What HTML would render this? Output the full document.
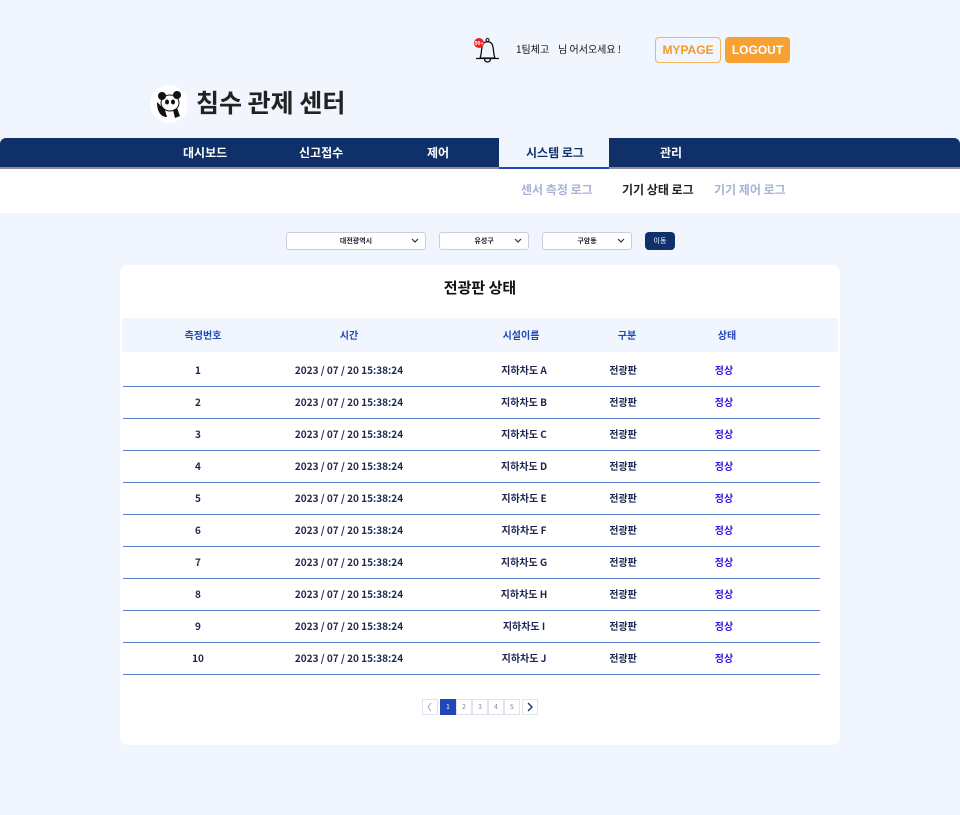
<!DOCTYPE html>
<html><head><meta charset="utf-8"><style>
*{margin:0;padding:0;box-sizing:border-box}
body{width:960px;height:815px;background:#f0f5fe;font-family:"Noto Sans CJK KR","Liberation Sans",sans-serif;position:relative;overflow:hidden;color:#111}
.abs{position:absolute}
.nav{left:0;top:138px;width:960px;height:31px;background:#10306a;border-radius:6px 6px 0 0;border-bottom:2px solid #8a8f99}
.nav span{position:absolute;top:7px;color:#fff;font-size:12px;font-weight:bold;line-height:16px}
.sub{left:0;top:169px;width:960px;height:44px;background:#fff}
.sel{top:232px;height:18px;background:#fff;border:1px solid #ccd;border-radius:3px;font-size:7px;font-weight:bold;text-align:center;line-height:16px;color:#223}
.chev{position:absolute;right:6px;top:5px}
.card{left:120px;top:265px;width:720px;height:480px;background:#fff;border-radius:8px}
.hdr{left:122px;top:318px;width:716px;height:34px;background:#f0f5fe}
.c{position:absolute;font-size:10px;line-height:12px;font-weight:bold;color:#1d2550;transform:translateX(-50%);white-space:nowrap}
.h{color:#1f47b8;top:329px}
.line{position:absolute;left:123px;width:697px;height:1px;background:#5a83cc}
.pg{top:699px;height:16px;width:16px;border:1px solid #e0e4ec;background:#fff;font-size:7px;color:#888;text-align:center;line-height:14px}
</style></head><body>
<svg class="abs" style="left:472px;top:35px" width="30" height="30" viewBox="0 0 30 30"><path d="M8 23 C10 19 9 12 11 9 C13 6 18 6 20 9 C22 12 21 19 23 23 Z" fill="none" stroke="#111" stroke-width="1.3"/><path d="M4 23.5 H27" stroke="#111" stroke-width="1.3"/><path d="M12.5 24 a3 3 0 0 0 6 0" fill="none" stroke="#111" stroke-width="1.3"/><circle cx="15.5" cy="5" r="1.5" fill="none" stroke="#111"/><circle cx="7" cy="8" r="5" fill="#e22"/><text x="7" y="10" font-size="5" fill="#fff" text-anchor="middle" font-weight="bold">99+</text></svg>
<div class="abs" style="left:516px;top:42px;font-size:10px;line-height:14px">1팀체고 &nbsp;&nbsp; 님 어서오세요 !</div>
<div class="abs" style="left:655px;top:37px;width:66px;height:26px;border:1px solid #f3b45a;border-radius:4px;color:#f39a25;font-family:'Liberation Sans',sans-serif;font-size:12px;font-weight:bold;text-align:center;line-height:24px">MYPAGE</div>
<div class="abs" style="left:725px;top:37px;width:65px;height:26px;background:#f7a033;border-radius:4px;color:#fff;font-family:'Liberation Sans',sans-serif;font-size:12px;font-weight:bold;text-align:center;line-height:26px">LOGOUT</div>
<div class="abs" style="left:150px;top:85px;width:38px;height:38px;border-radius:50%;background:#fff"></div>
<svg class="abs" style="left:153px;top:88px" width="32" height="32" viewBox="0 0 32 32"><ellipse cx="17" cy="15" rx="9" ry="8" fill="#fff" stroke="#111"/><circle cx="9" cy="8" r="4" fill="#111"/><circle cx="24" cy="7" r="4" fill="#111"/><ellipse cx="14" cy="14" rx="2" ry="2.5" fill="#111"/><ellipse cx="20" cy="14" rx="2" ry="2.5" fill="#111"/><path d="M4 14 C4 24 8 29 14 29 L12 22 Z M20 22 L22 30 L27 28 L24 20Z" fill="#111"/></svg>
<div class="abs" style="left:196px;top:85px;font-size:25px;line-height:34px;font-weight:bold;color:#222">침수 관제 센터</div>
<div class="abs nav">
<span style="left:183px">대시보드</span><span style="left:299px">신고접수</span><span style="left:427px">제어</span>
<div style="position:absolute;left:499px;top:0;width:110px;height:31px;background:#f0f5fe;border-bottom:2px solid #1f47b8"></div>
<span style="left:526px;color:#10306a">시스템 로그</span><span style="left:660px">관리</span></div>
<div class="abs sub"></div>
<div class="abs" style="left:521px;top:182px;font-size:12px;line-height:16px;font-weight:bold;color:#a8b2d4">센서 측정 로그</div>
<div class="abs" style="left:622px;top:182px;font-size:12px;line-height:16px;font-weight:bold;color:#222">기기 상태 로그</div>
<div class="abs" style="left:714px;top:182px;font-size:12px;line-height:16px;font-weight:bold;color:#a8b2d4">기기 제어 로그</div>
<div class="abs sel" style="left:286px;width:140px">대전광역시<svg class="chev" width="8" height="6"><path d="M1 1 L4 4 L7 1" fill="none" stroke="#333" stroke-width="1.2"/></svg></div>
<div class="abs sel" style="left:439px;width:90px">유성구<svg class="chev" width="8" height="6"><path d="M1 1 L4 4 L7 1" fill="none" stroke="#333" stroke-width="1.2"/></svg></div>
<div class="abs sel" style="left:542px;width:90px">구암동<svg class="chev" width="8" height="6"><path d="M1 1 L4 4 L7 1" fill="none" stroke="#333" stroke-width="1.2"/></svg></div>
<div class="abs" style="left:645px;top:232px;width:30px;height:18px;background:#10306a;border-radius:4px;color:#fff;font-size:7px;text-align:center;line-height:18px">이동</div>
<div class="abs card"></div>
<div class="c" style="left:480px;top:278px;font-size:15px;line-height:20px;color:#111">전광판 상태</div>
<div class="abs hdr"></div>
<div class="c h" style="left:203px">측정번호</div><div class="c h" style="left:349px">시간</div><div class="c h" style="left:521px">시설이름</div><div class="c h" style="left:627px">구분</div><div class="c h" style="left:727px">상태</div>
<div id="rows"></div>
<script>
var L="ABCDEFGHIJ",h="";
for(var i=0;i<10;i++){var y=364+i*32;
h+='<div class="c" style="left:198px;top:'+y+'px">'+(i+1)+'</div><div class="c" style="left:349px;top:'+y+'px">2023 / 07 / 20 15:38:24</div><div class="c" style="left:524px;top:'+y+'px">지하차도 '+L[i]+'</div><div class="c" style="left:623px;top:'+y+'px">전광판</div><div class="c" style="left:724px;top:'+y+'px;color:#3a1de0">정상</div><div class="line" style="top:'+(386+i*32)+'px"></div>';}
document.getElementById('rows').innerHTML=h;
</script>
<div class="abs pg" style="left:422px"><svg width="14" height="14"><path d="M8 3 L5 7 L8 11" fill="none" stroke="#9ab" stroke-width="1"/></svg></div>
<div class="abs pg" style="left:440px;background:#1f47b8;color:#fff;border-color:#1f47b8">1</div>
<div class="abs pg" style="left:456px">2</div><div class="abs pg" style="left:472px">3</div><div class="abs pg" style="left:488px">4</div><div class="abs pg" style="left:504px">5</div>
<div class="abs pg" style="left:522px"><svg width="14" height="14"><path d="M5 3 L9 7 L5 11" fill="none" stroke="#10306a" stroke-width="1.3"/></svg></div>
</body></html>
